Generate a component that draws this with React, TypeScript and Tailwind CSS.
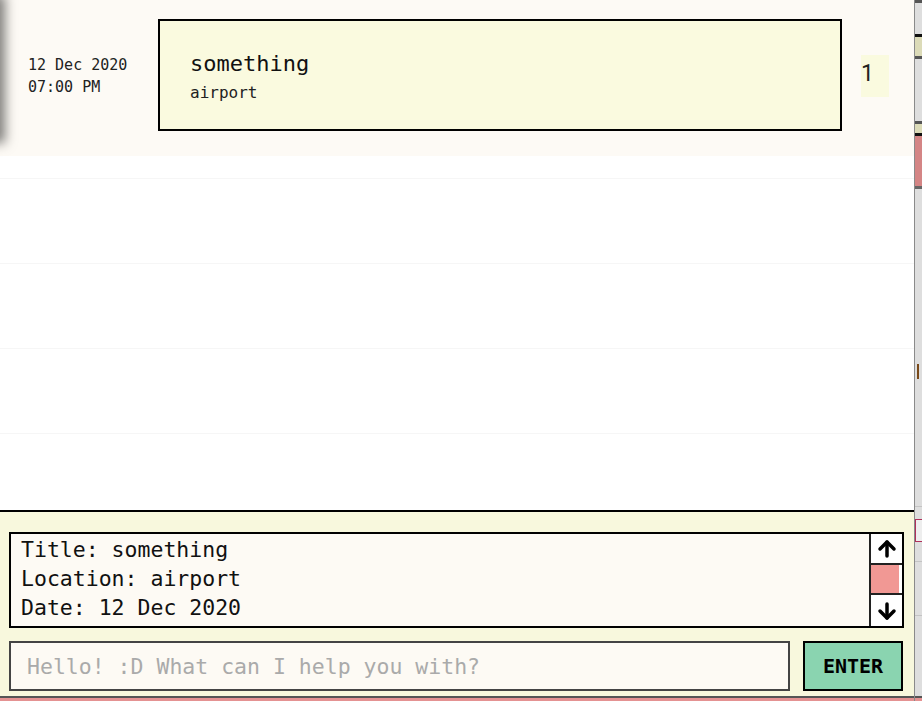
import React from "react";
import { ArrowUp, ArrowDown } from "lucide-react";

const mono = { fontFamily: '"DejaVu Sans Mono", "Liberation Mono", monospace' };

const event = {
  title: "something",
  location: "airport",
  date: "12 Dec 2020",
  time: "07:00 PM",
  count: 1,
};

// right edge: a slice of the window next to this one
const RightStrip = () => (
  <div className="w-[8px] h-full flex flex-col border-l border-[#8a8a8a] bg-[#dedede]">
    <div className="h-[3px] bg-[#555]" />
    <div className="h-[31px]" />
    <div className="h-[3px] bg-[#111]" />
    <div className="h-[19px] bg-[#dcdbb8]" />
    <div className="h-[3px] bg-[#555]" />
    <div className="h-[62px]" />
    <div className="h-[3px] bg-[#555]" />
    <div className="h-[9px] bg-[#dcdbb8]" />
    <div className="h-[3px] bg-[#111]" />
    <div className="h-[50px] bg-[#d48585]" />
    <div className="h-[3px] bg-[#666]" />
    <div className="h-[175px]" />
    <div className="h-[15px] w-[2px] ml-[2px] bg-[#7a4a1a]" />
    <div className="h-[128px] border-b border-[#c4c4c4]" />
    <div className="h-[12px]" />
    <div className="h-[23px] border border-r-0 border-[#b0305a] bg-[#eeeeee]" />
    <div className="h-[20px] border-b border-[#c4c4c4]" />
    <div className="h-[54px] border-b border-[#c4c4c4]" />
    <div className="flex-1" />
    <div className="h-[2px] bg-[#555]" />
    <div className="h-[3px] bg-[#e49292]" />
  </div>
);

const EventRow = () => (
  <div className="relative flex items-center h-[156px] pl-[28px] pr-[25px] pt-[19px] pb-[25px] bg-[#fdfaf5]">
    <div className="absolute left-[-12px] top-0 h-[138px] w-[12px] shadow-[0_0_12px_5px_rgba(0,0,0,0.5)]" />
    <div className="w-[130px] pt-[2px] text-[15px] leading-[22px] text-[#222]" style={mono}>
      <div>{event.date}</div>
      <div>{event.time}</div>
    </div>
    <div className="w-[684px] h-[112px] border-2 border-black bg-[#fafadf] pl-[30px] pt-[28px]" style={mono}>
      <div className="text-[22px] leading-[30px] text-[#111]">{event.title}</div>
      <div className="text-[16px] leading-[22px] text-[#222] mt-[3px]">{event.location}</div>
    </div>
    <div className="ml-[19px] mt-[2px] w-[28px] h-[42px] bg-[#fafadf] text-[23px] leading-[38px] text-[#222] font-['Roboto',sans-serif]">
      {event.count}
    </div>
  </div>
);

const Preview = () => (
  <div className="flex h-[96px] border-2 border-black bg-[#fdfaf4]">
    <div className="flex-1 pl-[10px] pt-[1px] text-[21.5px] leading-[29px] text-[#111]" style={mono}>
      <div>Title: {event.title}</div>
      <div>Location: {event.location}</div>
      <div>Date: {event.date}</div>
    </div>
    <div className="w-[33px] flex flex-col border-l-2 border-[#222] bg-white">
      <div className="h-[31px] flex items-center justify-center border-b-2 border-[#222]">
        <ArrowUp size={24} strokeWidth={3.5} color="#000" />
      </div>
      <div className="h-[28px] mr-[3px] bg-[#f19894]" />
      <div className="flex-1 flex items-center justify-center border-t-2 border-[#222]">
        <ArrowDown size={24} strokeWidth={3.5} color="#000" />
      </div>
    </div>
  </div>
);

export default function App() {
  return (
    <div className="flex w-[922px] h-[701px] overflow-hidden bg-white">
      <div className="w-[914px] h-full flex flex-col">
        <div className="flex-1 overflow-hidden">
          <EventRow />
          <div className="h-[23px] border-b border-[#f6f6f6]" />
          <div className="h-[85px] border-b border-[#f6f6f6]" />
          <div className="h-[85px] border-b border-[#f6f6f6]" />
          <div className="h-[85px] border-b border-[#f6f6f6]" />
        </div>
        <div className="h-[191px] border-t-2 border-black bg-[#f8f8dd] flex flex-col">
          <div className="flex-1 pt-[20px] pl-[9px] pr-[10px]">
            <Preview />
            <div className="flex gap-[13px] mt-[13px]">
              <input
                className="w-[781px] h-[50px] border-2 border-[#444] bg-[#fdfaf4] px-[16px] text-[21.5px] text-[#111] placeholder:text-[#aaaaaa] outline-none"
                style={mono}
                placeholder="Hello! :D What can I help you with?"
              />
              <button
                className="w-[100px] h-[50px] border-2 border-black bg-[#8ad4b0] text-[20px] font-bold text-black"
                style={mono}
              >
                ENTER
              </button>
            </div>
          </div>
          <div className="h-[2px] bg-[#555]" />
          <div className="h-[3px] bg-[#e49292]" />
        </div>
      </div>
      <RightStrip />
    </div>
  );
}
